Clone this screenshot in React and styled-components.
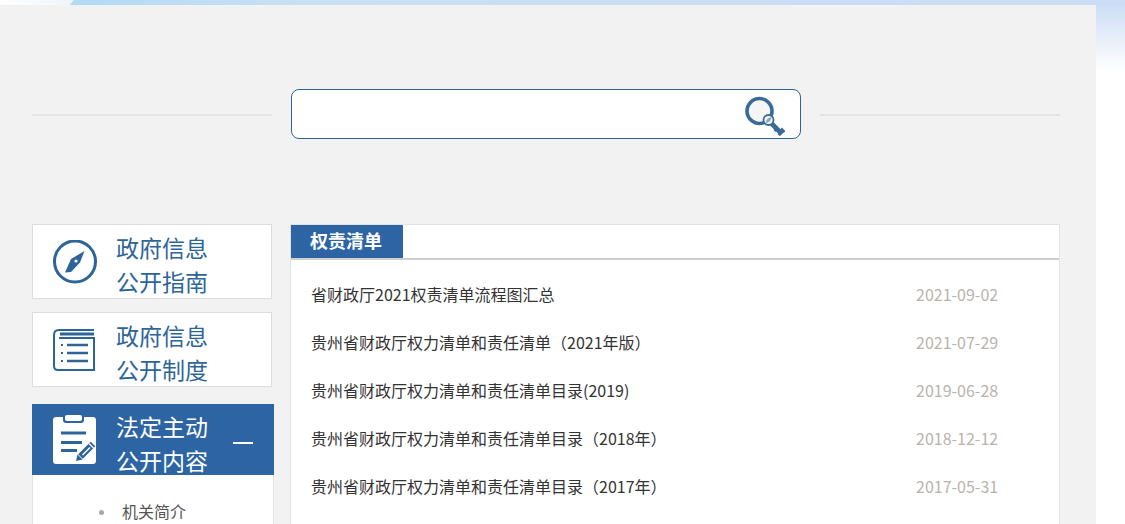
import styled, { createGlobalStyle } from 'styled-components'

const rows = [
  { title: '省财政厅2021权责清单流程图汇总', date: '2021-09-02' },
  { title: '贵州省财政厅权力清单和责任清单（2021年版）', date: '2021-07-29' },
  { title: '贵州省财政厅权力清单和责任清单目录(2019)', date: '2019-06-28' },
  { title: '贵州省财政厅权力清单和责任清单目录（2018年）', date: '2018-12-12' },
  { title: '贵州省财政厅权力清单和责任清单目录（2017年）', date: '2017-05-31' },
]

function KeyIcon() {
  return (
    <svg width="40" height="42" viewBox="0 0 40 42" fill="none">
      <circle cx="14.500" cy="16" r="12.500" stroke="#3b6a96" strokeWidth="3.600" fill="#f5f5f5" />
      <path d="M25 27 L37 39" stroke="#3b6a96" strokeWidth="4.600" />
      <path d="M29.500 36 L32 33.500 M33.500 40 L36.500 37" stroke="#3b6a96" strokeWidth="3" />
      <path d="M36 33.500 L39.500 37" stroke="#3b6a96" strokeWidth="2.600" />
      <circle cx="23.500" cy="25" r="5" fill="#f5f5f5" stroke="#3b6a96" strokeWidth="1.800" />
      <path d="M20.500 28 C21 24.500 23 22.500 26.500 22 C26 25.500 24.500 27.500 20.500 28 Z" fill="#8aa5bf" />
    </svg>
  )
}

function CompassIcon() {
  return (
    <svg width="44" height="44" viewBox="0 0 44 44" fill="none">
      <circle cx="22" cy="21.500" r="20.500" stroke="#2d6598" strokeWidth="3" />
      <path d="M31.500 11 L27 22.500 L18 32 L12 32.500 L18 19 Z" fill="#2d6598" />
      <circle cx="23" cy="21" r="1.600" fill="#fff" />
    </svg>
  )
}

function BookIcon() {
  return (
    <svg width="42" height="42" viewBox="0 0 42 42" fill="none">
      <path d="M41 1 H6 C3 1 1 3 1 6 V37 C1 39.500 2.500 41 5 41 H41 V9 H6" stroke="#2d6598" strokeWidth="2" />
      <path d="M7 5 H41" stroke="#2d6598" strokeWidth="3" />
      <path d="M8 16 H10 M8 24 H10 M8 32 H10" stroke="#2d6598" strokeWidth="2" />
      <path d="M14 16 H35 M14 24 H35 M14 32 H35" stroke="#2d6598" strokeWidth="2.400" />
    </svg>
  )
}

function ClipboardIcon() {
  return (
    <svg width="43" height="50" viewBox="0 0 43 50" fill="none">
      <rect x="12" y="0" width="17" height="6" rx="2" fill="#fff" />
      <path d="M3 2 H10 V5 C10 7 11 8 13 8 H28 C30 8 31 7 31 5 V2 H40 C41.700 2 43 3.300 43 5 V46 C43 47.700 41.700 49 40 49 H3 C1.300 49 0 47.700 0 46 V5 C0 3.300 1.300 2 3 2 Z" fill="#fff" />
      <path d="M8 18 H33 M8 27.500 H29 M8 35.500 H24" stroke="#2d6598" strokeWidth="3" />
      <path d="M27.500 41.500 L40 29" stroke="#2d6598" strokeWidth="6.500" />
      <path d="M29.500 40 L37 32.500" stroke="#fff" strokeWidth="1.400" />
      <path d="M36 28.500 L40.500 33" stroke="#fff" strokeWidth="1.200" />
      <path d="M23 46 L24.500 39.500 L29.500 44.500 Z" fill="#2d6598" />
    </svg>
  )
}

export default function App() {
  return (
    <>
      <GlobalStyle />
      <Page>
        <TopStrip>
          <Notch />
        </TopStrip>
        <Panel>
          <SearchRow>
            <Rule />
            <SearchBox>
              <SearchInput aria-label="搜索" />
              <KeyIcon />
            </SearchBox>
            <Rule />
          </SearchRow>
          <Columns>
            <Sidebar>
              <NavCard>
                <IconSlot><CompassIcon /></IconSlot>
                <NavTitle>政府信息<br />公开指南</NavTitle>
              </NavCard>
              <NavCard>
                <IconSlot><BookIcon /></IconSlot>
                <NavTitle>政府信息<br />公开制度</NavTitle>
              </NavCard>
              <ActiveGroup>
                <ActiveHead>
                  <IconSlot><ClipboardIcon /></IconSlot>
                  <NavTitle $active>法定主动<br />公开内容</NavTitle>
                  <Collapse />
                </ActiveHead>
                <SubList>
                  <SubItem>机关简介</SubItem>
                </SubList>
              </ActiveGroup>
            </Sidebar>
            <Content>
              <ContentHead>
                <Tab>权责清单</Tab>
              </ContentHead>
              <RowList>
                {rows.map((row) => (
                  <Row key={row.date}>
                    <RowTitle>{row.title}</RowTitle>
                    <RowDate>{row.date}</RowDate>
                  </Row>
                ))}
              </RowList>
            </Content>
          </Columns>
        </Panel>
      </Page>
    </>
  )
}

const GlobalStyle = createGlobalStyle`
  html, body {
    margin: 0;
    padding: 0;
    height: 100%;
    overflow: hidden;
    background: #fff;
  }
  body {
    font-family: "Noto Sans CJK SC", "Noto Sans", sans-serif;
  }
`
const Page = styled.div`
  height: 524px;
  overflow: hidden;
  display: flex;
  flex-direction: column;
  background: linear-gradient(to bottom, #c9dbf5 0, #e6eefa 38px, #ffffff 72px);
`
const TopStrip = styled.div`
  height: 5px;
  flex: none;
  background: linear-gradient(to right, #b3daf4 70px, #c8e0f5 300px, #cbdcf5 925px, #cbdcf5 100%);
`
const Notch = styled.div`
  width: 74px;
  height: 5px;
  background: linear-gradient(to right, #ffffff, #eef5fb);
  clip-path: polygon(0 0, 100% 0, 94% 100%, 0 100%);
`
const Panel = styled.main`
  width: 1028px;
  flex: 1;
  min-height: 0;
  padding: 84px 36px 0 32px;
  background: #f2f2f2;
  display: flex;
  flex-direction: column;
`
const SearchRow = styled.div`
  display: flex;
  align-items: center;
  justify-content: space-between;
`
const Rule = styled.div`
  width: 240px;
  height: 2px;
  margin-top: 2px;
  background: #e4e4e4;
`
const SearchBox = styled.div`
  box-sizing: border-box;
  width: 510px;
  height: 50px;
  padding: 4px 15px 0 10px;
  display: flex;
  align-items: center;
  background: #fff;
  border: 1px solid #2d6598;
  border-radius: 8px;
`
const SearchInput = styled.input`
  flex: 1;
  border: 0;
  outline: 0;
  background: transparent;
  font: inherit;
`
const Columns = styled.div`
  flex: none;
  height: 340px;
  margin-top: 85px;
  display: grid;
  grid-template-columns: 242px 770px;
  column-gap: 16px;
`
const Sidebar = styled.aside`
  display: flex;
  flex-direction: column;
`
const NavCard = styled.a`
  box-sizing: border-box;
  width: 240px;
  height: 75px;
  margin-bottom: 13px;
  padding: 0 0 0 20px;
  display: flex;
  align-items: center;
  background: #fff;
  border: 1px solid #dcdcdc;
`
const IconSlot = styled.div`
  width: 63px;
  flex: none;
  display: flex;
  align-items: center;
`
const NavTitle = styled.div`
  align-self: flex-start;
  padding-top: 5px;
  font-size: 23px;
  line-height: 34px;
  white-space: nowrap;
  color: ${(p) => (p.$active ? '#fff' : '#2d6598')};
`
const ActiveGroup = styled.section`
  flex: 1;
  margin-top: 4px;
  display: flex;
  flex-direction: column;
`
const ActiveHead = styled.div`
  height: 71px;
  flex: none;
  padding-left: 21px;
  display: flex;
  align-items: center;
  background: #2d65a4;
`
const Collapse = styled.span`
  width: 20px;
  height: 2px;
  margin: 7px 21px 0 auto;
  background: #fff;
`
const SubList = styled.ul`
  flex: 1;
  margin: 0;
  padding: 24px 0 0 89px;
  list-style: none;
  background: #fff;
  border: 1px solid #e2e2e2;
  border-top: 0;
`
const SubItem = styled.li`
  position: relative;
  font-size: 16px;
  line-height: 24px;
  color: #555;
  &::before {
    content: '';
    position: absolute;
    left: -23px;
    top: 11px;
    width: 5px;
    height: 5px;
    border-radius: 50%;
    background: #a8a8a8;
  }
`
const Content = styled.section`
  display: flex;
  flex-direction: column;
  background: #fff;
  border: 1px solid #e2e2e2;
`
const ContentHead = styled.div`
  height: 33px;
  flex: none;
  border-bottom: 2px solid #cfcfcf;
`
const Tab = styled.h2`
  box-sizing: border-box;
  width: 112px;
  height: 33px;
  margin: 0;
  padding-left: 19px;
  font-size: 18px;
  font-weight: 700;
  line-height: 31px;
  color: #fff;
  background: #2d65a4;
`
const RowList = styled.ul`
  margin: 0;
  padding: 10px 0 0 20px;
  list-style: none;
`
const Row = styled.li`
  height: 48px;
  display: flex;
  align-items: center;
  justify-content: space-between;
  font-size: 16px;
`
const RowTitle = styled.span`
  color: #333;
`
const RowDate = styled.span`
  width: 143px;
  color: #b8b3ad;
`
